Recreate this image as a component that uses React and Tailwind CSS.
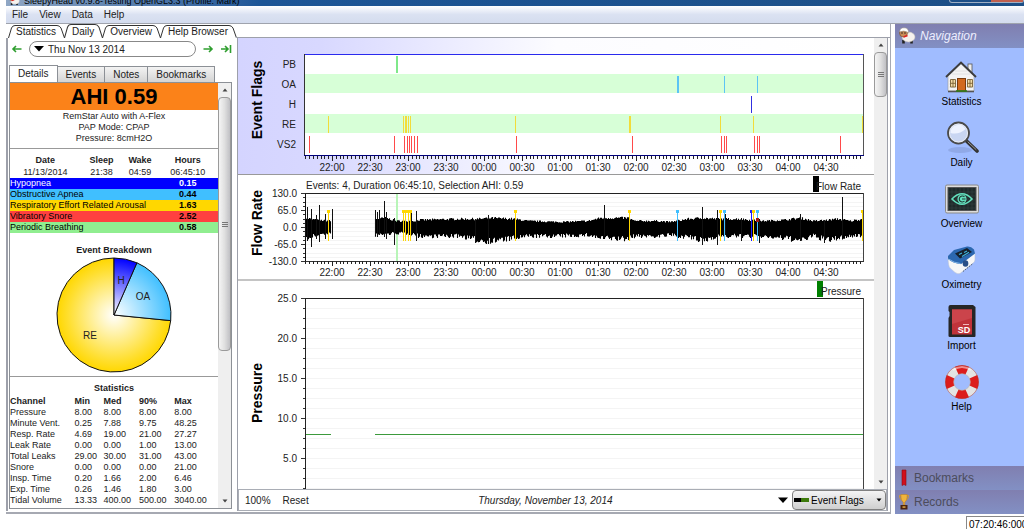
import { useState } from 'react';

const MENUS = ['File', 'View', 'Data', 'Help'];

const EVENTS = [
  { name: 'Hypopnea', value: '0.15', row: 'bg-[#0000ff] text-white' },
  { name: 'Obstructive Apnea', value: '0.44', row: 'bg-[#40bfff] text-black' },
  { name: 'Respiratory Effort Related Arousal', value: '1.63', row: 'bg-[#ffd700] text-black' },
  { name: 'Vibratory Snore', value: '2.52', row: 'bg-[#ff4040] text-black' },
  { name: 'Periodic Breathing', value: '0.58', row: 'bg-[#90ee90] text-black' },
];

const STATS = [
  ['Pressure', '8.00', '8.00', '8.00', '8.00'],
  ['Minute Vent.', '0.25', '7.88', '9.75', '48.25'],
  ['Resp. Rate', '4.69', '19.00', '21.00', '27.27'],
  ['Leak Rate', '0.00', '0.00', '1.00', '13.00'],
  ['Total Leaks', '29.00', '30.00', '31.00', '43.00'],
  ['Snore', '0.00', '0.00', '0.00', '21.00'],
  ['Insp. Time', '0.20', '1.66', '2.00', '6.46'],
  ['Exp. Time', '0.26', '1.46', '1.80', '3.00'],
  ['Tidal Volume', '13.33', '400.00', '500.00', '3040.00'],
];

const TIMES = [
  '22:00', '22:30', '23:00', '23:30', '00:00', '00:30', '01:00',
  '01:30', '02:00', '02:30', '03:00', '03:30', '04:00', '04:30',
];

// plot area shared by all graphs
const LEFT = 67;
const RIGHT = 625;
const FIRST_LABEL = 94;
const HALF_HOUR = 38;

const FLAG_ROWS = [
  { label: 'PB', color: '#7fe88a', marks: [[158, 2]] },
  { label: 'OA', color: '#5cc4f5', marks: [[439, 2], [486, 1], [519, 1]] },
  { label: 'H', color: '#3030e0', marks: [[513, 1]] },
  {
    label: 'RE',
    color: '#f2dc3a',
    marks: [[90, 1], [165, 1], [167, 2], [170, 1], [172, 1], [277, 1], [391, 2], [482, 1], [515, 1], [624, 1]],
  },
  {
    label: 'VS2',
    color: '#ff4a4a',
    marks: [
      [71, 1], [156, 1], [166, 1], [169, 1], [171, 1], [173, 1], [176, 1], [179, 1],
      [278, 1], [394, 1], [483, 1], [486, 1], [488, 1], [516, 1], [519, 1], [521, 1], [602, 1],
    ],
  },
];

// breathing envelope: [x, height above zero, depth below zero]
const ENVELOPE = [
  [67, 9, 12], [78, 7, 8], [93, 6, 7], [94, 0, 0],
  [136, 0, 0], [137, 8, 8], [148, 9, 7], [158, 6, 6], [176, 6, 7], [180, 7, 9],
  [222, 8, 9], [240, 8, 13], [252, 9, 14], [276, 8, 11], [290, 6, 9],
  [322, 5, 9], [350, 6, 8], [362, 9, 11], [390, 9, 12], [396, 6, 9],
  [420, 6, 9], [432, 5, 8], [450, 8, 10], [464, 9, 14], [478, 8, 9],
  [500, 8, 9], [524, 6, 9], [545, 7, 11], [562, 9, 13], [575, 6, 9],
  [590, 7, 13], [600, 8, 11], [612, 6, 9], [625, 8, 8],
];

// single breaths well outside of the envelope: [x, up, down]
const SPIKES = [
  [69, 20, 14], [73, 18, 20], [78, 12, 12], [81, 22, 15], [87, 13, 12], [94, 18, 12],
  [137, 17, 8], [139, 15, 10], [141, 17, 8], [146, 26, 10], [148, 15, 12], [156, 9, 18],
  [173, 14, 7], [178, 16, 14], [237, 8, 16], [250, 12, 15], [366, 22, 9], [464, 20, 18],
  [479, 17, 18], [487, 13, 8], [503, 9, 14], [515, 15, 9], [521, 8, 16], [604, 30, 9],
  [586, 7, 16], [562, 13, 14],
];

const FLOW_MARKS = [
  [90, '#ffd700'], [165, '#ffd700'], [167, '#ffd700'], [170, '#ffd700'], [172, '#ffd700'],
  [277, '#ffd700'], [391, '#ffd700'], [439, '#40bfff'], [482, '#ffd700'], [486, '#40bfff'],
  [513, '#2020ff'], [515, '#ffd700'], [519, '#40bfff'], [624, '#ffd700'],
];

function buildWave(mid) {
  let seed = 7;
  const rand = () => {
    seed = (seed * 16807) % 2147483647;
    return seed / 2147483647;
  };

  let d = '';
  for (let i = 0; i < ENVELOPE.length - 1; i++) {
    const [x0, u0, l0] = ENVELOPE[i];
    const [x1, u1, l1] = ENVELOPE[i + 1];
    if (u0 === 0 || u1 === 0) continue;
    for (let x = x0; x < x1; x++) {
      const t = (x - x0) / (x1 - x0);
      const up = (u0 + (u1 - u0) * t) * (0.85 + rand() * 0.3);
      const low = (l0 + (l1 - l0) * t) * (0.75 + rand() * 0.5);
      d += `M${x + 0.5} ${(mid - up).toFixed(1)}V${(mid + low).toFixed(1)}`;
    }
  }
  return d;
}

const WAVE = buildWave(52);

function TimeAxis({ y, color }) {
  const ticks = [];
  for (let i = -7; i < 140; i++) {
    ticks.push({ x: Math.round(FIRST_LABEL + i * 3.8), major: i % 10 === 0 });
  }

  return (
    <g>
      <g fill={color} shapeRendering="crispEdges">
        {ticks.map((t) => (
          <rect key={t.x} x={t.x} y={y} width="1" height={t.major ? 5 : 3} />
        ))}
      </g>
      {TIMES.map((time, i) => (
        <text key={time} x={FIRST_LABEL + i * HALF_HOUR} y={y + 15} textAnchor="middle" fontSize="10" fill="#222">
          {time}
        </text>
      ))}
    </g>
  );
}

function ValueAxis({ top, step, labels, minor, bottom }) {
  const ticks = [];
  for (let y = top; y < bottom; y += step / minor) {
    ticks.push(Math.round(y));
  }

  return (
    <g>
      <g fill="#333" shapeRendering="crispEdges">
        {ticks.map((y, i) => (
          <rect key={y} x={i % minor === 0 ? 63 : 65} y={y} width={i % minor === 0 ? 4 : 2} height="1" />
        ))}
      </g>
      <g fill="#f4f4f4" shapeRendering="crispEdges">
        {ticks.slice(1).map((y) => (
          <rect key={y} x={LEFT + 1} y={y} width={RIGHT - LEFT - 1} height="1" />
        ))}
      </g>
      {labels.map((label, i) => (
        <text key={label} x="59" y={top + i * step + 4} textAnchor="end" fontSize="10" fill="#222">
          {label}
        </text>
      ))}
    </g>
  );
}

function GraphTitle({ y, children }) {
  return (
    <text transform={`translate(24 ${y}) rotate(-90)`} textAnchor="middle" fontSize="14" fontWeight="bold">
      {children}
    </text>
  );
}

function EventFlags() {
  return (
    <svg className="block w-full shrink-0 border-b border-[#999]" viewBox="0 0 636 136" role="img" aria-label="Event Flags">
      <defs>
        <linearGradient id="flagsBg" x1="0" y1="0" x2="1" y2="0">
          <stop offset="0" stopColor="#d4d4ff" />
          <stop offset="0.13" stopColor="#d8d8ff" />
          <stop offset="0.5" stopColor="#fcfcff" />
          <stop offset="1" stopColor="#fff" />
        </linearGradient>
      </defs>
      <rect width="636" height="136" fill="url(#flagsBg)" />
      <GraphTitle y={62}>Event Flags</GraphTitle>
      <rect x={LEFT} y="16" width={RIGHT - LEFT} height="101" fill="#fff" />
      {FLAG_ROWS.map((row, i) => (
        <g key={row.label} shapeRendering="crispEdges">
          {i % 2 === 1 && <rect x={LEFT} y={16 + i * 20} width={RIGHT - LEFT} height="19" fill="#d7ffd7" />}
          <text x="58" y={30 + i * 20} textAnchor="end" fontSize="10" fill="#222">
            {row.label}
          </text>
          {row.marks.map(([x, w]) => (
            <rect key={x} x={x} y={18 + i * 20} width={w} height="17" fill={row.color} />
          ))}
        </g>
      ))}
      <g shapeRendering="crispEdges">
        <rect x={LEFT - 1} y="16" width="1" height="102" fill="#333" />
        <rect x={RIGHT} y="16" width="1" height="102" fill="#555" />
        <rect x={LEFT} y="16" width={RIGHT - LEFT} height="1" fill="#2a2aee" />
        <rect x={LEFT - 1} y="117" width={RIGHT - LEFT + 2} height="1" fill="#00007a" />
      </g>
      <TimeAxis y={118} color="#222" />
    </svg>
  );
}

function FlowRate() {
  return (
    <svg className="block w-full shrink-0 border-b-2 border-[#c4c4c4]" viewBox="0 0 636 104" role="img" aria-label="Flow Rate">
      <GraphTitle y={48}>Flow Rate</GraphTitle>
      <text x="68" y="14" fontSize="10" fill="#222">
        Events: 4, Duration 06:45:10, Selection AHI: 0.59
      </text>
      <ValueAxis top={18} step={17} minor={4} bottom={87} labels={['130.0', '65.0', '0.0', '-65.0', '-130.0']} />
      <rect x="158" y="19" width="2" height="67" fill="#b8f5b8" />
      <path d={WAVE} stroke="#000" strokeWidth="1.1" />
      {SPIKES.map(([x, up, down]) => (
        <rect key={x} x={x} y={52 - up} width="1" height={up + down} fill="#111" />
      ))}
      <g shapeRendering="crispEdges">
        {FLOW_MARKS.map(([x, color]) => (
          <g key={x} fill={color}>
            <rect x={x} y="35" width="1" height="31" />
            <rect x={x - 1} y="35" width="3" height="3" />
          </g>
        ))}
        <rect x="518" y="43" width="3" height="4" fill="#a01818" />
        <rect x={LEFT} y="18" width="1" height="69" fill="#111" />
        <rect x={RIGHT} y="18" width="1" height="69" fill="#444" />
        <rect x={LEFT} y="18" width={RIGHT - LEFT} height="1" fill="#222" />
        <rect x={LEFT} y="86" width={RIGHT - LEFT + 1} height="1" fill="#333" />
        <rect x="575" y="1" width="6" height="16" fill="#000" />
      </g>
      <TimeAxis y={86} color="#222" />
      <text x="623" y="15" textAnchor="end" fontSize="10" fill="#222">
        Flow Rate
      </text>
    </svg>
  );
}

function Pressure() {
  return (
    <svg className="block w-full shrink-0" viewBox="0 0 636 208" role="img" aria-label="Pressure">
      <GraphTitle y={112}>Pressure</GraphTitle>
      <ValueAxis top={17} step={40} minor={4} bottom={208} labels={['25.0', '20.0', '15.0', '10.0', '5.0']} />
      <g shapeRendering="crispEdges">
        <rect x={LEFT} y="17" width="1" height="191" fill="#222" />
        <rect x={RIGHT} y="17" width="1" height="191" fill="#444" />
        <rect x={LEFT} y="17" width={RIGHT - LEFT} height="1" fill="#222" />
        <rect x={LEFT + 1} y="153" width="25" height="1" fill="#3c9a3c" />
        <rect x="137" y="153" width={RIGHT - 137} height="1" fill="#3c9a3c" />
        <rect x="579" y="0" width="6" height="16" fill="#008000" />
      </g>
      <text x="623" y="14" textAnchor="end" fontSize="10" fill="#222">
        Pressure
      </text>
    </svg>
  );
}

function Scrollbar({ thumb }) {
  return (
    <div className="flex w-[13px] shrink-0 flex-col items-center bg-[#efefef]">
      <svg className="h-3.5 w-3 shrink-0" viewBox="0 0 12 14">
        <path d="M3.5 8.5L6 5.5L8.5 8.5Z" fill="#444" />
      </svg>
      <div className="w-full min-h-0 flex-1">
        <div
          className={`flex w-full flex-col items-center justify-center gap-px rounded-sm border border-[#9a9a9a] bg-linear-to-r from-[#f5f5f5] via-[#e0e0e0] to-[#c0c0c4] ${thumb}`}
        >
          <span className="h-px w-1.5 bg-[#777]" />
          <span className="h-px w-1.5 bg-[#777]" />
          <span className="h-px w-1.5 bg-[#777]" />
        </div>
      </div>
      <svg className="h-3.5 w-3 shrink-0" viewBox="0 0 12 14">
        <path d="M3.5 5.5L6 8.5L8.5 5.5Z" fill="#444" />
      </svg>
    </div>
  );
}

function PageTab({ label, active, onClick }) {
  return (
    <button type="button" onClick={onClick} className={`-mr-px flex items-end ${active ? 'h-3.5' : 'h-[13px]'}`}>
      <svg className="h-full w-[7px]" viewBox="0 0 7 13" preserveAspectRatio="none" fill="none">
        <path d="M0.5 13L3.5 3Q4.5 0.5 7 0.5" stroke="#333" />
      </svg>
      <span className="flex h-full items-center border-t border-[#333] px-px text-[10px] leading-none">{label}</span>
      <svg className="h-full w-2" viewBox="0 0 8 13" preserveAspectRatio="none" fill="none">
        <path d="M0 0.5Q2.5 0.5 4 3L7.5 13" stroke="#333" />
      </svg>
    </button>
  );
}

function GreenArrow({ kind }) {
  return (
    <svg className="h-3 w-3 shrink-0" viewBox="0 0 12 12" fill="none" stroke="#2f9e2f" strokeWidth="1.6">
      {kind === 'left' && <path d="M10.5 6H2M5 3L2 6L5 9" />}
      {kind === 'right' && <path d="M1.5 6H10M7 3L10 6L7 9" />}
      {kind === 'last' && <path d="M1 6H8M5 3L8 6L5 9M10.5 2V10" />}
    </svg>
  );
}

function Pie() {
  return (
    <svg className="mx-auto block h-[118px] w-[118px]" viewBox="-59 -59 118 118" role="img" aria-label="Event Breakdown">
      <defs>
        <radialGradient id="pieRe" gradientUnits="userSpaceOnUse" cx="0" cy="0" r="57">
          <stop offset="0" stopColor="#fff" />
          <stop offset="0.8" stopColor="#ffdf30" />
          <stop offset="1" stopColor="#ffd700" />
        </radialGradient>
        <radialGradient id="pieOa" gradientUnits="userSpaceOnUse" cx="0" cy="0" r="57">
          <stop offset="0" stopColor="#fff" />
          <stop offset="1" stopColor="#40bfff" />
        </radialGradient>
        <radialGradient id="pieH" gradientUnits="userSpaceOnUse" cx="0" cy="0" r="57">
          <stop offset="0" stopColor="#fff" />
          <stop offset="1" stopColor="#0000ff" />
        </radialGradient>
      </defs>
      <g stroke="#111" strokeLinejoin="round">
        <path d="M0 0L56.7 5.6A57 57 0 1 1 0 -57Z" fill="url(#pieRe)" />
        <path d="M0 0L22.9 -52.2A57 57 0 0 1 56.7 5.6Z" fill="url(#pieOa)" />
        <path d="M0 0L0 -57A57 57 0 0 1 22.9 -52.2Z" fill="url(#pieH)" />
      </g>
      <g fontSize="10" fill="#222" textAnchor="middle">
        <text x="7" y="-31">H</text>
        <text x="29" y="-15">OA</text>
        <text x="-24" y="24">RE</text>
      </g>
    </svg>
  );
}

function Details() {
  return (
    <div className="flex min-h-0 flex-1 border border-[#8c9096] bg-white">
      <div className="min-w-0 flex-1 overflow-hidden text-[9px] leading-[11px] text-[#222]">
        <h1 className="bg-[#fb8219] text-center text-[22px] leading-[27px] font-bold text-black">AHI 0.59</h1>
        <p className="mt-px text-center">
          RemStar Auto with A-Flex
          <br />
          PAP Mode: CPAP
          <br />
          Pressure: 8cmH2O
        </p>
        <hr className="mt-1 mb-1.5 border-[#999]" />

        <table className="w-full table-fixed border-collapse text-center">
          <colgroup>
            <col className="w-[34%]" />
            <col className="w-[20%]" />
            <col className="w-[17%]" />
            <col className="w-[29%]" />
          </colgroup>
          <thead>
            <tr>
              <th className="p-0">Date</th>
              <th className="p-0">Sleep</th>
              <th className="p-0">Wake</th>
              <th className="p-0">Hours</th>
            </tr>
          </thead>
          <tbody>
            <tr className="h-3">
              <td className="p-0">11/13/2014</td>
              <td className="p-0">21:38</td>
              <td className="p-0">04:59</td>
              <td className="p-0">06:45:10</td>
            </tr>
            {EVENTS.map((event) => (
              <tr key={event.name} className={event.row}>
                <td colSpan={3} className="p-0 text-left">{event.name}</td>
                <td className="p-0 font-bold">{event.value}</td>
              </tr>
            ))}
          </tbody>
        </table>

        <h2 className="mt-3 text-center font-bold">Event Breakdown</h2>
        <Pie />
        <hr className="mt-0.5 mb-1.5 border-[#999]" />

        <table className="w-full table-fixed border-collapse text-left">
          <caption className="pb-px font-bold">Statistics</caption>
          <colgroup>
            <col className="w-[31%]" />
            <col className="w-[14%]" />
            <col className="w-[17%]" />
            <col className="w-[17%]" />
            <col className="w-[21%]" />
          </colgroup>
          <thead>
            <tr className="h-3">
              <th className="p-0">Channel</th>
              <th className="p-0">Min</th>
              <th className="p-0">Med</th>
              <th className="p-0">90%</th>
              <th className="p-0">Max</th>
            </tr>
          </thead>
          <tbody>
            {STATS.map((row) => (
              <tr key={row[0]}>
                {row.map((cell, i) => (
                  <td key={i} className="p-0 whitespace-nowrap">{cell}</td>
                ))}
              </tr>
            ))}
          </tbody>
        </table>
      </div>
      <Scrollbar thumb="h-[64%]" />
    </div>
  );
}

function DayPanel() {
  const [tab, setTab] = useState('Details');

  return (
    <div className="flex w-[231px] shrink-0 flex-col border-l-2 border-[#9da0aa] pr-[5px] pb-0.5 pl-px">
      <div className="flex h-[22px] items-center gap-1.5 pl-0.5">
        <button type="button" aria-label="Previous day"><GreenArrow kind="left" /></button>
        <button
          type="button"
          className="flex h-4 flex-1 items-center gap-1 rounded-full border border-[#888] px-1 text-[10px]"
        >
          <svg className="h-2.5 w-2.5" viewBox="0 0 10 10"><path d="M0 2H10L5 7.5Z" /></svg>
          Thu Nov 13 2014
        </button>
        <button type="button" aria-label="Next day"><GreenArrow kind="right" /></button>
        <button type="button" aria-label="Last day"><GreenArrow kind="last" /></button>
      </div>

      <div className="mt-[5px] flex h-[17px] items-end text-[10px]">
        {['Details', 'Events', 'Notes', 'Bookmarks'].map((name) => (
          <button
            key={name}
            type="button"
            onClick={() => setTab(name)}
            className={
              name === tab
                ? 'h-[17px] border border-b-0 border-[#8c9096] bg-white px-2 leading-none'
                : 'h-4 border border-b-0 border-l-0 border-[#8c9096] bg-linear-to-b from-[#f3f3f3] to-[#d4d4d4] px-2 leading-none'
            }
          >
            {name}
          </button>
        ))}
      </div>
      <Details />
    </div>
  );
}

function Graphs() {
  return (
    <div className="flex min-w-0 flex-1 flex-col border-r border-l border-[#9da0aa]">
      <div className="flex min-h-0 flex-1">
        <div className="min-w-0 flex-1 overflow-hidden">
          <EventFlags />
          <FlowRate />
          <Pressure />
        </div>
        <Scrollbar thumb="h-[45px]" />
      </div>
      <div className="flex h-[22px] shrink-0 items-center border border-[#a9adb5] pl-1.5 text-[10px] text-[#222]">
        <span>100%</span>
        <button type="button" className="ml-3">Reset</button>
        <span className="flex-1 pl-1 text-center italic">Thursday, November 13, 2014</span>
        <svg className="mr-1 h-2.5 w-2.5" viewBox="0 0 10 10"><path d="M0 2.5H10L5 8Z" /></svg>
        <div className="relative">
          <select
            aria-label="Graph"
            className="h-5 w-[94px] appearance-none rounded-sm border border-[#808080] bg-linear-to-b from-[#f4f4f4] to-[#cfcfcf] pl-[18px] text-[10px] text-black"
          >
            <option>Event Flags</option>
            <option>Flow Rate</option>
            <option>Pressure</option>
          </select>
          <svg className="pointer-events-none absolute top-2 left-0.5 h-1 w-[15px]" viewBox="0 0 15 4">
            <rect width="7" height="4" />
            <rect x="7" width="8" height="4" fill="#3c7a0a" />
          </svg>
          <svg className="pointer-events-none absolute top-2 right-1 h-1 w-1.5" viewBox="0 0 6 4">
            <path d="M0.5 0.5H5.5L3 3.5Z" />
          </svg>
        </div>
      </div>
    </div>
  );
}

function HouseIcon() {
  return (
    <svg className="h-[34px] w-[34px]" viewBox="0 0 34 34">
      <rect x="24" y="4" width="4" height="10" fill="#eee" stroke="#555" strokeWidth="0.8" />
      <path d="M4 16L17 4L30 16V31H4Z" fill="#f4f4f4" stroke="#999" strokeWidth="0.6" />
      <path d="M5 21H29M5 24H29M5 27H29M8 14H26M11 11H23" stroke="#ddd" strokeWidth="0.8" />
      <path d="M2 17L17 2.5L32 17" fill="none" stroke="#3c3c3c" strokeWidth="1.8" />
      <path d="M4 31.5H30" stroke="#555" strokeWidth="1.6" />
      <rect x="13.5" y="18.5" width="8" height="12.5" fill="#d2691e" stroke="#7a3b0c" />
      <path d="M12 31H23" stroke="#2f7d1f" strokeWidth="1.6" />
      <g fill="#f3dca8" stroke="#7b6236" strokeWidth="0.9">
        <path d="M6.5 19.5H11.5V27H6.5ZM23.5 19.5H28.5V27H23.5Z" />
        <path d="M6.5 23.3H11.5M23.5 23.3H28.5M9 19.5V27M26 19.5V27" />
      </g>
    </svg>
  );
}

function LensIcon() {
  return (
    <svg className="h-[34px] w-[34px]" viewBox="0 0 34 34">
      <ellipse cx="15" cy="29" rx="12" ry="3" fill="#7f95d0" opacity="0.5" />
      <path d="M21 19.5L32 30" stroke="#333" strokeWidth="3.6" strokeLinecap="round" />
      <path d="M23 21L31 28.5" stroke="#999" strokeWidth="1" strokeLinecap="round" />
      <circle cx="13.500" cy="12" r="10.5" fill="#c9d6f2" stroke="#4a4a4a" strokeWidth="1.8" />
      <path d="M5.5 12A8 8 0 0 1 20.500 8Q14 14 5.5 12Z" fill="#eef3ff" />
      <circle cx="13.5" cy="12" r="9" fill="none" stroke="#f0f0f0" strokeWidth="0.8" />
    </svg>
  );
}

function EyeIcon() {
  return (
    <svg className="h-[34px] w-[34px]" viewBox="0 0 34 34">
      <rect x="0.5" y="3" width="33" height="28" rx="1.5" fill="#dcdcdc" stroke="#8a8a8a" />
      <rect x="3" y="5.5" width="28" height="23" fill="#1f2a2a" stroke="#555" />
      <path
        d="M7 6V28M11 6V28M15 6V28M19 6V28M23 6V28M27 6V28M3.5 10H30.5M3.5 14H30.5M3.5 18H30.5M3.5 22H30.5M3.5 26H30.5"
        stroke="#3a4a48"
        strokeWidth="0.5"
      />
      <path d="M7 17Q17 6.5 27 17Q17 27.5 7 17Z" fill="none" stroke="#63e0bd" strokeWidth="1.6" />
      <circle cx="17" cy="17" r="4.6" fill="#63e0bd" />
      <path d="M19.5 15A3 3 0 1 0 19.5 19M17 17H20.5" fill="none" stroke="#1f3a35" strokeWidth="1.1" />
    </svg>
  );
}

function OximeterIcon() {
  return (
    <svg className="h-[34px] w-[34px]" viewBox="0 0 34 34">
      <path
        d="M3 14L16 21L30 10V17Q30 19 27 21L15 30.5Q13 31.5 10 29.5L5 25Q3 23 3 14Z"
        fill="#f7f7f7"
        stroke="#b9c2d6"
        strokeWidth="0.6"
      />
      <path d="M3 13L9 7L22 3.5Q26 3 29 6.5L30 10.5L16 21Q8 20.500 3 16Z" fill="#2c68b0" />
      <path d="M10 10.5L22 5L27 9L15 15.500Z" fill="#16202c" />
      <path d="M14 11.5L17 10M19 9.5L22 8M17 13.5L24 9.3" stroke="#3fb2dd" strokeWidth="1.2" />
      <path d="M3.5 16Q9 20 15.5 20.500" fill="none" stroke="#7eb2e6" />
      <ellipse cx="20.5" cy="20.5" rx="2.8" ry="3.2" fill="#2a4f86" />
      <path d="M18 28.500L28 20.500" stroke="#54637c" strokeDasharray="1.5 1" />
    </svg>
  );
}

function CardIcon() {
  return (
    <svg className="h-[34px] w-[34px]" viewBox="0 0 34 34">
      <path
        d="M5.5 1H28L30.5 3V32Q30.5 33 29.5 33H5Q3.5 33 3.5 32V14L4.5 12V8L3.5 7V3Q3.5 1 5.5 1Z"
        fill="#262626"
      />
      <rect x="7" y="5.5" width="20" height="25" fill="#c0333a" />
      <path d="M7 5.5H27V14L7 20Z" fill="#cb444b" />
      <path d="M18 20.5H24" stroke="#f0b7ba" />
      <text x="19" y="29" textAnchor="middle" fontSize="9" fontWeight="bold" fill="#fff">SD</text>
    </svg>
  );
}

function BuoyIcon() {
  return (
    <svg className="h-[34px] w-[34px]" viewBox="0 0 34 34">
      <circle cx="17" cy="17" r="12.5" fill="none" stroke="#e3e3e3" strokeWidth="8.5" />
      <circle
        cx="17"
        cy="17"
        r="12.5"
        fill="none"
        stroke="#dc1c1c"
        strokeWidth="8.5"
        pathLength="8"
        strokeDasharray="1.1 0.9"
        strokeDashoffset="0.55"
      />
      <path d="M8 5Q17 -1 26 5" fill="none" stroke="#fff" strokeWidth="2" opacity="0.5" />
      <circle cx="17" cy="17" r="16.5" fill="none" stroke="#a03030" strokeWidth="0.5" />
      <circle cx="17" cy="17" r="8.3" fill="none" stroke="#b0b0b0" strokeWidth="0.6" />
    </svg>
  );
}

function SheepIcon({ className }) {
  return (
    <svg className={className} viewBox="0 0 18 18">
      <path d="M5.5 13V16.5M13.5 13V16.5" stroke="#222" strokeWidth="2.6" />
      <ellipse cx="10.5" cy="10" rx="6.5" ry="5" fill="#f6f2ee" stroke="#c9c0b8" strokeWidth="0.5" />
      <circle cx="5.5" cy="6" r="4" fill="#c98b58" stroke="#6b4a2a" strokeWidth="0.6" />
      <path d="M1.5 5Q2 0.5 6 0.8Q10.5 0.5 10.8 6L9 5Q6 3 1.5 5Z" fill="#fff" stroke="#8a8078" strokeWidth="0.5" />
      <path d="M3.5 6H4.5M6.5 6H7.5" stroke="#111" strokeWidth="1.3" />
      <path d="M5.5 10L9.5 8.5" stroke="#d22" strokeWidth="1.8" />
    </svg>
  );
}

const NAV_ITEMS = [
  { label: 'Statistics', Icon: HouseIcon },
  { label: 'Daily', Icon: LensIcon },
  { label: 'Overview', Icon: EyeIcon },
  { label: 'Oximetry', Icon: OximeterIcon },
  { label: 'Import', Icon: CardIcon },
  { label: 'Help', Icon: BuoyIcon },
];

function Sidebar() {
  return (
    <aside className="flex w-[129px] shrink-0 flex-col bg-[#a0bcff]">
      <h2 className="flex h-6 items-center gap-1 bg-linear-to-b from-[#807fb0] to-[#8290c4] pl-[3px] text-xs text-[#eef] italic">
        <SheepIcon className="h-[18px] w-[18px]" />
        Navigation
      </h2>
      <nav className="flex flex-1 flex-col items-center gap-[13px] pt-3 pl-1">
        {NAV_ITEMS.map(({ label, Icon }) => (
          <button key={label} type="button" className="flex flex-col items-center gap-0.5 text-[10px] leading-3 text-black">
            <Icon />
            {label}
          </button>
        ))}
      </nav>
      <button type="button" className="flex h-6 items-center gap-1 bg-linear-to-b from-[#807fb0] to-[#8290c4] pl-[3px] text-xs text-[#4c4c5c]">
        <svg className="h-[18px] w-3" viewBox="0 0 12 18">
          <path d="M4 1H8V16.5L6 15.5L4 16.5Z" fill="#d20f1c" stroke="#8f0a12" strokeWidth="0.6" />
        </svg>
        Bookmarks
      </button>
      <button type="button" className="flex h-6 items-center gap-1 bg-linear-to-b from-[#807fb0] to-[#8290c4] pl-[3px] text-xs text-[#4c4c5c]">
        <svg className="h-[18px] w-3" viewBox="0 0 12 18">
          <path d="M3 2.5H1.5Q1.5 6.5 4 7M9 2.5H10.5Q10.5 6.5 8 7" fill="none" stroke="#d99a2b" />
          <path d="M2.8 1.5H9.2Q9.2 8 6.8 9V12H5.2V9Q2.8 8 2.8 1.5Z" fill="#f0b43c" stroke="#b8781a" strokeWidth="0.5" />
          <rect x="2.5" y="12" width="7" height="4.5" fill="#4a2412" />
          <rect x="4.5" y="13.3" width="3" height="1.5" fill="#e0a848" />
        </svg>
        Records
      </button>
    </aside>
  );
}

export default function App() {
  const [page, setPage] = useState('Daily');

  return (
    <div className="flex h-screen flex-col overflow-hidden bg-white pl-1.5 font-['Liberation_Sans',Arial,sans-serif] text-[#222]">
      <header className="flex h-1.5 shrink-0 items-end gap-1 overflow-hidden bg-linear-to-r from-[#8fa6c4] via-[#1c5596] via-25% to-[#1d4f86] pl-0.5">
        <SheepIcon className="h-3 w-3 shrink-0" />
        <span className="text-[9px] leading-[9px] text-black">SleepyHead v0.9.8-Testing OpenGL3.3 (Profile: Mark)</span>
        <span className="ml-auto flex h-[3px] w-[75px] self-start rounded-b border border-t-0 border-[#9fb0c4]">
          <span className="flex-1" />
          <span className="w-8 bg-[#c0604e]" />
        </span>
      </header>
      <nav className="flex h-[18px] shrink-0 items-center gap-[11px] border-b border-[#9fa3ad] bg-linear-to-b from-white via-[#dbe2f2] to-[#d4dcee] pl-1.5 text-[10px]">
        {MENUS.map((menu) => (
          <button key={menu} type="button">{menu}</button>
        ))}
      </nav>

      <div className="flex min-h-0 flex-1">
        <div className="flex min-w-0 flex-1 flex-col border-r border-b-2 border-[#a6a9b2]">
          <div className="flex h-3.5 shrink-0 items-end pl-0.5">
            {['Statistics', 'Daily', 'Overview', 'Help Browser'].map((name) => (
              <PageTab key={name} label={name} active={name === page} onClick={() => setPage(name)} />
            ))}
            <span className="flex-1 border-b border-[#9da0aa]" />
          </div>
          <div className="flex min-h-0 flex-1 pr-0.5 pb-px">
            <DayPanel />
            <Graphs />
          </div>
        </div>
        <div className="w-1 shrink-0 bg-white" />
        <Sidebar />
      </div>

      <footer className="flex h-[15px] shrink-0 justify-end pt-0.5">
        <output className="h-5 w-[58px] overflow-hidden border border-r-0 border-[#888] bg-white pl-0.5 text-[10px] leading-4 text-black">
          07:20:46:000
        </output>
      </footer>
    </div>
  );
}
